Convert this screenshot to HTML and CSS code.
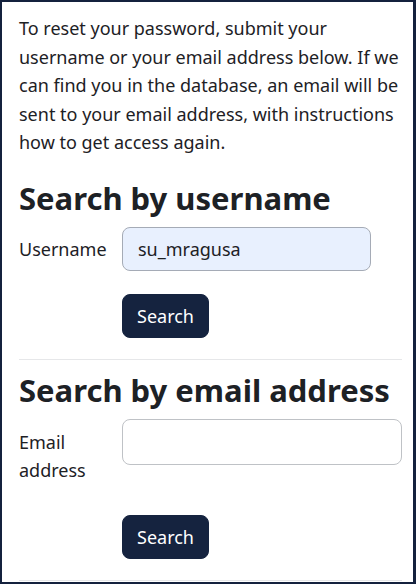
FILE: index.html
```html
<!DOCTYPE html>
<html lang="en">
<head>
<meta charset="utf-8">
<title>Forgotten password</title>
<link rel="stylesheet" href="styles.css">
</head>
<body>
<div class="frame">
  <p class="intro">To reset your password, submit your username or your email address below. If we can find you in the database, an email will be sent to your email address, with instructions how to get access again.</p>

  <section class="block">
    <h3 class="block-title">Search by username</h3>
    <div class="row">
      <label class="label" for="u">Username</label>
      <div class="field"><input id="u" class="input input-filled input-short" type="text" value="su_mragusa"></div>
    </div>
    <div class="row">
      <div class="label"></div>
      <div class="field"><button class="btn" type="button">Search</button></div>
    </div>
  </section>

  <hr class="sep">

  <section class="block">
    <h3 class="block-title">Search by email address</h3>
    <div class="row">
      <label class="label label-wrap" for="e">Email address</label>
      <div class="field"><input id="e" class="input input-tall" type="text" value=""></div>
    </div>
    <div class="row">
      <div class="label"></div>
      <div class="field"><button class="btn" type="button">Search</button></div>
    </div>
  </section>

  <hr class="sep sep-last">
</div>
</body>
</html>
```
FILE: styles.css
```css
html, body {
  margin: 0;
  padding: 0;
  background: #ffffff;
}
.frame {
  box-sizing: border-box;
  width: 416px;
  height: 584px;
  border: 2px solid #14213d;
  border-right-width: 3px;
  padding: 12px 11px 0 17px;
  overflow: hidden;
  font-family: "Noto Sans", "Open Sans", sans-serif;
  font-size: 18px;
  line-height: 28.5px;
  color: #1d2125;
}
.intro {
  margin: 0 0 21px 0;
}
.block-title {
  margin: 0 0 9px 0;
  font-size: 31px;
  line-height: 40px;
  font-weight: 700;
  color: #1d2125;
}
.row {
  display: flex;
  margin-bottom: 22.5px;
}
.row:last-child {
  margin-bottom: 21px;
}
.label {
  width: 103px;
  flex: 0 0 103px;
  padding: 8px 0;
  box-sizing: border-box;
}
.label-wrap {
  padding-top: 9px;
}
.field {
  flex: 1;
  min-width: 0;
}
.input {
  -webkit-appearance: none;
  appearance: none;
  box-sizing: border-box;
  display: block;
  width: 100%;
  height: 44px;
  margin: 0;
  padding: 7px 15px;
  font-family: "Noto Sans", "Open Sans", sans-serif;
  font-size: 18px;
  line-height: 28.5px;
  color: #1d2125;
  background-color: #fff;
  border: 1px solid #bfc2c6;
  border-radius: 8px;
  outline: none;
}
.input-filled {
  background-color: #e8f0fe;
  border-color: #a5abb6;
}
.input-short {
  width: 249px;
}
.input-tall {
  height: 46px;
}
.btn {
  box-sizing: border-box;
  display: block;
  height: 44px;
  margin: 0;
  padding: 7px 14px;
  font-family: inherit;
  font-size: 18px;
  line-height: 28.5px;
  color: #fff;
  background: #15233f;
  border: 1px solid #15233f;
  border-radius: 8px;
}
.sep {
  margin: 0 0 10px 0;
  border: 0;
  border-top: 1px solid #e6e7e9;
}
```
